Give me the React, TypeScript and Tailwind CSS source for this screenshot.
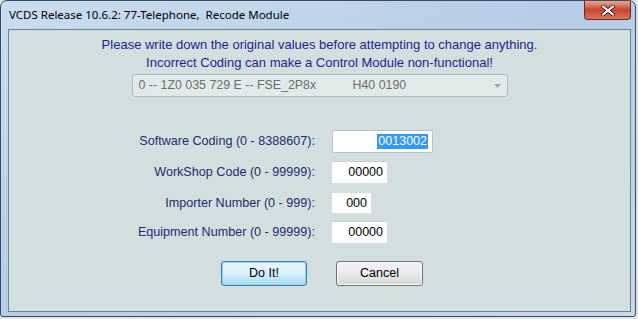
import React from "react";

function CloseX() {
  return (
    <svg width="14" height="11" viewBox="0 0 14 11">
      <path d="M2 1.5 L12 9.5 M12 1.5 L2 9.5" stroke="#5a1a12" strokeWidth="4" strokeLinecap="round" />
      <path d="M2 1.5 L12 9.5 M12 1.5 L2 9.5" stroke="#ffffff" strokeWidth="2.2" strokeLinecap="round" />
    </svg>
  );
}

function Row({ label, box, children }: { label: string; box: string; children: React.ReactNode }) {
  return (
    <div className="flex items-center">
      <div className="w-[306px] text-right text-[12.6px] text-[#1f2a70]">{label}</div>
      <div className={"ml-[17px] flex items-center justify-end bg-white pr-[4px] text-[12.5px] text-black " + box}>{children}</div>
    </div>
  );
}

export default function App() {
  return (
    <div className="w-[638px] h-[319px] bg-[#dde4ea]" style={{ fontFamily: '"Liberation Sans", Arial, sans-serif' }}>
      <div className="w-[636px] h-[317px] rounded-t-[7px] rounded-b-[3px] border border-[#3b4b5c] bg-gradient-to-br from-[#cadcf0] via-[#b6cde6] to-[#c6d9ed] flex flex-col">
        <div className="h-[28px] flex items-start">
          <div className="pl-[8px] pt-[6px] text-[11.5px] leading-[16px] text-black whitespace-pre" style={{ fontFamily: '"Noto Sans", sans-serif' }}>
            VCDS Release 10.6.2: 77-Telephone,  Recode Module
          </div>
          <div className="ml-auto mr-[4px] w-[47px] h-[19px] rounded-b-[4px] border border-t-0 border-[#6b2a22] bg-gradient-to-b from-[#e7a596] via-[#c7432f] to-[#d9755e] flex items-center justify-center">
            <CloseX />
          </div>
        </div>
        <div className="ml-[7px] mr-[4px] mb-[4px] flex-1 border border-[#6d8195] bg-[#d3dfdf] flex flex-col items-center">
          <div className="mt-[6px] text-center text-[13px] leading-[18px] text-[#1e1e96]">
            <div>Please write down the original values before attempting to change anything.</div>
            <div>Incorrect Coding can make a Control Module non-functional!</div>
          </div>
          <div className="mt-[2px] w-[376px] h-[23px] rounded-[3px] border border-[#aeb8c0] bg-[#e2e9e9] flex items-center pl-[6px] text-[12.4px] text-[#6e6e6e]">
            <span className="w-[214px]">0 -- 1Z0 035 729 E -- FSE_2P8x</span>
            <span>H40 0190</span>
            <svg className="ml-auto mr-[6px]" width="7" height="4" viewBox="0 0 7 4">
              <path d="M0 0 L7 0 L3.5 4 Z" fill="#a0a6aa" />
            </svg>
          </div>
          <div className="mt-[33px] self-stretch flex flex-col">
            <Row label="Software Coding (0 - 8388607):" box="w-[101px] h-[23px] border border-[#b8c2c8] rounded-[2px] pr-[3px]">
              <span className="bg-[#3399ff] text-white leading-[15px] px-[1px]">0013002</span>
            </Row>
            <div className="mt-[8px]">
              <Row label="WorkShop Code (0 - 99999):" box="w-[55px] h-[22px] border-t border-[#c9d0d3]">00000</Row>
            </div>
            <div className="mt-[10px]">
              <Row label="Importer Number (0 - 999):" box="w-[39px] h-[20px]">000</Row>
            </div>
            <div className="mt-[8px]">
              <Row label="Equipment Number (0 - 99999):" box="w-[55px] h-[22px] border-t border-[#c9d0d3]">00000</Row>
            </div>
          </div>
          <div className="mt-[18px] flex gap-[29px] pl-[5px]">
            <button className="w-[86px] h-[25px] rounded-[3px] border border-[#3c7fb1] bg-gradient-to-b from-[#eaf6fd] via-[#d9f0fc] to-[#a7d9f5] text-[12.5px] text-black shadow-[inset_0_0_0_1px_#8fd0f0]">
              Do It!
            </button>
            <button className="w-[87px] h-[25px] rounded-[3px] border border-[#707070] bg-gradient-to-b from-[#f2f2f2] via-[#ebebeb] to-[#d5d5d5] text-[12.5px] text-black shadow-[inset_0_0_0_1px_#fbfbfb]">
              Cancel
            </button>
          </div>
        </div>
      </div>
    </div>
  );
}
